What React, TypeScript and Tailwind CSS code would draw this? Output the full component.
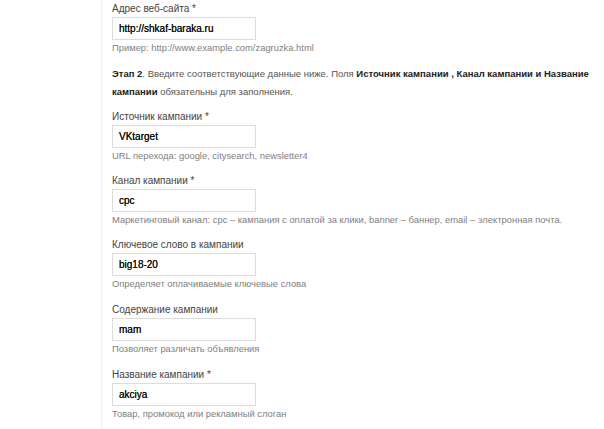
import React from "react";

interface FieldProps {
    label: string;
    value: string;
    hint: string;
    required?: boolean;
}

function Field({ label, value, hint, required }: FieldProps) {
    return (
        <div className="flex flex-col">
            <label className="text-[10px] leading-[16px] text-[#444]">
                {label}
                {required && " *"}
            </label>
            <div className="flex h-[23px] w-[144px] items-center border border-[#dcdcdc] bg-white px-[6px] text-[10px] text-[#111] [text-shadow:0_0_0.3px_#111]">
                {value}
            </div>
            <p className="text-[9.4px] leading-[16px] text-[#808080]">{hint}</p>
        </div>
    );
}

export default function App() {
    return (
        <div className="flex h-[429px] w-[604px] overflow-hidden bg-white" style={{ fontFamily: '"Liberation Sans", Arial, sans-serif' }}>
            <div className="w-[101px] shrink-0" />
            <div className="flex-1 border-l border-[#f0f0f0] pl-[10px] pt-[1px]">
                <Field
                    label="Адрес веб-сайта"
                    required
                    value="http://shkaf-baraka.ru"
                    hint="Пример: http://www.example.com/zagruzka.html"
                />
                <p className="mt-[9px] pr-[8px] text-[9.5px] leading-[18px] text-[#555]">
                    <b className="text-[#222]">Этап 2</b>. Введите соответствующие данные ниже. Поля{" "}
                    <b className="text-[#222]">Источник кампании , Канал кампании и Название кампании</b> обязательны для заполнения.
                </p>
                <div className="mt-[8px] flex flex-col gap-[9px]">
                    <Field
                        label="Источник кампании"
                        required
                        value="VKtarget"
                        hint="URL перехода: google, citysearch, newsletter4"
                    />
                    <Field
                        label="Канал кампании"
                        required
                        value="cpc"
                        hint="Маркетинговый канал: cpc – кампания с оплатой за клики, banner – баннер, email – электронная почта."
                    />
                    <Field
                        label="Ключевое слово в кампании"
                        value="big18-20"
                        hint="Определяет оплачиваемые ключевые слова"
                    />
                    <div className="mt-[1px]">
                        <Field
                            label="Содержание кампании"
                            value="mam"
                            hint="Позволяет различать объявления"
                        />
                    </div>
                    <div className="mt-[1px]">
                        <Field
                            label="Название кампании"
                            required
                            value="akciya"
                            hint="Товар, промокод или рекламный слоган"
                        />
                    </div>
                </div>
            </div>
        </div>
    );
}
